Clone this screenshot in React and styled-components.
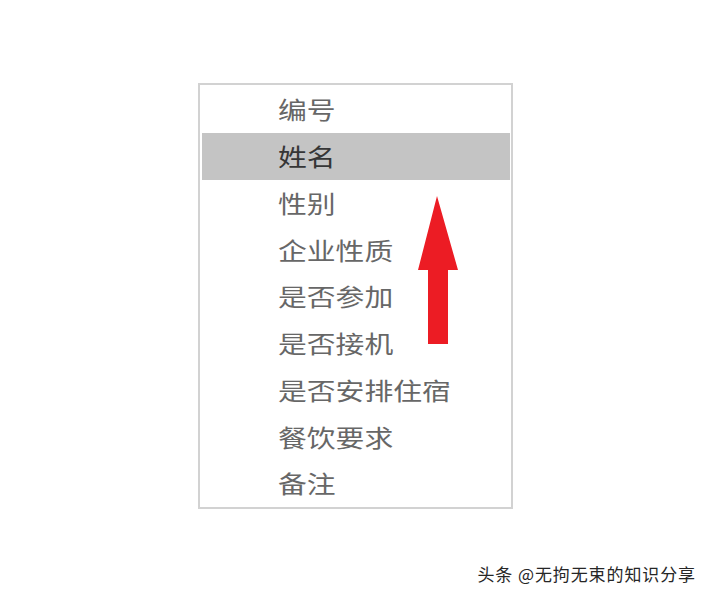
import React from "react";
import styled, { createGlobalStyle } from "styled-components";

const Global = createGlobalStyle`
  html, body { margin: 0; padding: 0; background: #ffffff; }
  body { font-family: "Noto Sans CJK SC", "Noto Sans", sans-serif; }
`;

const Stage = styled.div`
  position: relative;
  width: 710px;
  height: 599px;
  box-sizing: border-box;
  padding: 83px 0 0 198px;
  background: #ffffff;
  overflow: hidden;
`;

const ListBox = styled.ul`
  list-style: none;
  margin: 0;
  width: 315px;
  height: 426px;
  box-sizing: border-box;
  border: 2px solid #d2d2d2;
  padding: 1px 1px 0 2px;
  background: #ffffff;
`;

const Item = styled.li`
  height: 46.75px;
  display: flex;
  align-items: center;
  padding-left: 76px;
  background: ${(p) => (p.$selected ? "#c4c4c4" : "transparent")};
  color: ${(p) => (p.$selected ? "#363636" : "#676767")};
`;

const Label = styled.span`
  display: inline-block;
  font-size: 24px;
  line-height: 1;
  white-space: nowrap;
  transform: scaleX(1.2);
  transform-origin: left center;
`;

const ArrowMark = styled.svg`
  position: absolute;
  left: 0;
  top: 0;
  pointer-events: none;
`;

const Watermark = styled.div`
  position: absolute;
  right: 14px;
  bottom: 17px;
  font-size: 17px;
  line-height: 1;
  letter-spacing: 0.9px;
  color: #262626;
  white-space: nowrap;
  text-shadow: 0 0 2px #ffffff, 0 0 1px #ffffff;
`;

const items = [
  "编号",
  "姓名",
  "性别",
  "企业性质",
  "是否参加",
  "是否接机",
  "是否安排住宿",
  "餐饮要求",
  "备注",
];

export default function App() {
  return (
    <>
      <Global />
      <Stage>
        <ListBox>
          {items.map((t, i) => (
            <Item key={t} $selected={i === 1}>
              <Label>{t}</Label>
            </Item>
          ))}
        </ListBox>
        <ArrowMark width="710" height="599" viewBox="0 0 710 599">
          <polygon
            points="437,196 458,270 448,270 448,344 428,344 428,270 418,270"
            fill="#ec1c24"
          />
        </ArrowMark>
        <Watermark>头条 @无拘无束的知识分享</Watermark>
      </Stage>
    </>
  );
}
